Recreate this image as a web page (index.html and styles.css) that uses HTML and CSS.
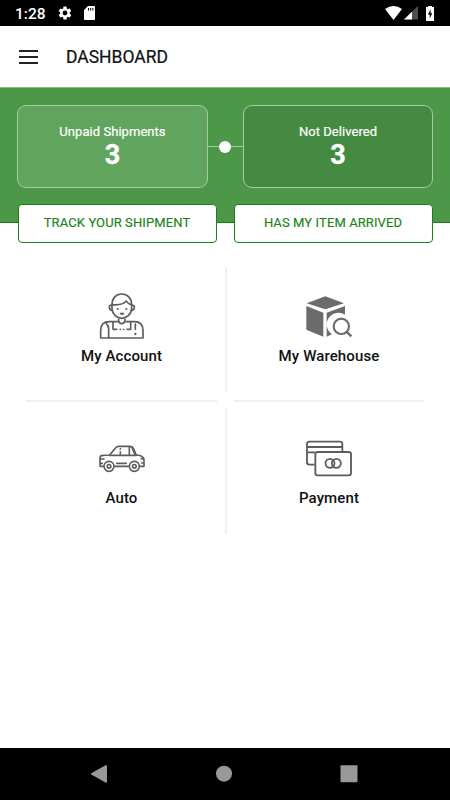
FILE: index.html
```html
<!DOCTYPE html>
<html lang="en">
<head>
  <meta charset="UTF-8">
  <meta name="viewport" content="width=device-width, initial-scale=1">
  <title>Dashboard</title>
  <link rel="stylesheet" href="styles.css">
</head>
<body>
  <!-- Status bar -->
  <div class="status-bar">
    <span class="time">1:28</span>
    <svg class="gear" width="16" height="16" viewBox="0 0 24 24"><path fill="#fff" d="M19.14 12.94c.04-.3.06-.61.06-.94s-.02-.64-.07-.94l2.03-1.58a.49.49 0 0 0 .12-.61l-1.92-3.32a.49.49 0 0 0-.59-.22l-2.39.96c-.5-.38-1.03-.7-1.62-.94l-.36-2.54a.48.48 0 0 0-.48-.41h-3.84a.47.47 0 0 0-.47.41l-.36 2.54c-.59.24-1.13.57-1.62.94l-2.39-.96a.48.48 0 0 0-.59.22L2.74 8.87a.47.47 0 0 0 .12.61l2.03 1.58c-.05.3-.09.63-.09.94s.02.64.07.94l-2.03 1.58a.49.49 0 0 0-.12.61l1.92 3.32c.12.22.37.29.59.22l2.39-.96c.5.38 1.03.7 1.62.94l.36 2.54c.05.24.24.41.48.41h3.84c.24 0 .44-.17.47-.41l.36-2.54c.59-.24 1.13-.56 1.62-.94l2.39.96c.22.08.47 0 .59-.22l1.92-3.32a.47.47 0 0 0-.12-.61l-2.01-1.58zM12 15.6a3.6 3.6 0 1 1 0-7.2 3.6 3.6 0 0 1 0 7.2z"/></svg>
    <svg width="11" height="14" viewBox="0 0 11 14"><path fill="#fff" d="M4 0h6q1 0 1 1v12q0 1-1 1H1q-1 0-1-1V4z"/><path stroke="#000" stroke-width="1" d="M4.500 2v2.500M6.700 2v2.500M8.900 2v2.500"/></svg>
    <div class="status-right">
      <svg width="17" height="14" viewBox="0 0 17 14"><path fill="#fff" d="M0 3Q8.500-3 17 3L8.500 14z"/></svg>
      <svg width="14" height="14" viewBox="0 0 14 14"><path fill="#505050" d="M14 0v13.500H0z"/><path fill="#fff" d="M8 5.800v7.700H0z"/></svg>
      <svg class="battery" width="8" height="15" viewBox="0 0 8 15"><path fill="#fff" d="M2 1V0h4v1h2v14H0V1z"/><path fill="#000" d="M4.700 3.500L1.800 8.500h1.900v4L6.300 7.300H4.600z"/></svg>
    </div>
  </div>

  <!-- App bar -->
  <header class="app-bar">
    <div class="menu"><span></span><span></span><span></span></div>
    <h1>DASHBOARD</h1>
  </header>

  <!-- Shipment summary -->
  <section class="summary">
    <div class="card card-light">
      <p>Unpaid Shipments</p>
      <strong>3</strong>
    </div>
    <div class="connector"><span class="dot"></span></div>
    <div class="card card-dark">
      <p>Not Delivered</p>
      <strong>3</strong>
    </div>
  </section>

  <div class="actions">
    <button type="button">TRACK YOUR SHIPMENT</button>
    <button type="button">HAS MY ITEM ARRIVED</button>
  </div>

  <!-- Tiles -->
  <main class="tiles">
    <a class="tile">
      <svg width="46" height="47" viewBox="86 36 138 141">
        <g fill="none" stroke="#5c5c5c" stroke-width="5" stroke-linecap="round" stroke-linejoin="round">
          <path d="M125 74C125 54 137 42 154 42S184 54 184 74V86C183 103 168 115 154 115S126 103 125 86z"/>
          <path d="M126 74C145 76 160 72 168 63Q172 71 182 74"/>
          <path d="M125 75Q116 75 117 83T126 91M184 75Q193 75 192 83T183 91"/>
          <path d="M145 117V123Q147 131 154 131T164 123V117"/>
          <path d="M142 125H117Q91 125 91 151V174H218V151Q218 125 192 125H167"/>
          <path d="M108 131Q115 137 115 147V173M128 126V148H139M181 126V148H170M195 132V148"/>
        </g>
        <g fill="#5c5c5c"><circle cx="142" cy="87" r="3.300"/><circle cx="168" cy="87" r="3.300"/><path d="M148 98h14q-1 7-7 7t-7-7z"/><circle cx="150" cy="148" r="2.700"/><circle cx="160" cy="148" r="2.700"/><circle cx="195" cy="162" r="3.500"/></g>
      </svg>
      <span>My Account</span>
    </a>
    <i class="line-v"></i>
    <a class="tile">
      <svg width="46" height="47" viewBox="109 36 138 141">
        <path fill="#6b6b6b" d="M111 70L167 49L223 70L167 88zM110 78L161 98V170L110 149zM171 98L226 78V104A35 35 0 0 0 187 163L171 170z"/>
        <circle cx="215" cy="139" r="23" fill="none" stroke="#6b6b6b" stroke-width="6.500"/>
        <path d="M230 155L245 169" stroke="#6b6b6b" stroke-width="7"/>
      </svg>
      <span>My Warehouse</span>
    </a>
    <i class="line-h"></i>
    <i class="line-h"></i>
    <a class="tile">
      <svg width="46" height="47" viewBox="86 27 138 141">
        <g fill="none" stroke="#5c5c5c" stroke-width="4.800" stroke-linejoin="round" stroke-linecap="round">
          <path d="M99 124H89V99Q89 91 98 91L118 90L136 68Q139 64 145 64H178Q186 64 189 70L198 90Q221 91 221 106V124H208M133 124H174"/>
          <path d="M118 91H198M177 65V90M185 67L193 87M139 115H168M90 102H101M90 115H96M213 101H220M214 114H219"/>
          <circle cx="116" cy="124" r="15"/><circle cx="192" cy="124" r="15"/>
          <circle cx="116" cy="124" r="5.500"/><circle cx="192" cy="124" r="5.500"/>
        </g>
        <path stroke="#5c5c5c" stroke-width="4.500" d="M150 69v5M150 79v10"/>
      </svg>
      <span>Auto</span>
    </a>
    <i class="line-v"></i>
    <a class="tile">
      <svg width="46" height="47" viewBox="109 27 138 141">
        <g fill="none" stroke="#5c5c5c" stroke-width="5.500">
          <path d="M135 119H119Q112 119 112 112V57Q112 50 119 50H211Q218 50 218 57V80"/>
          <path d="M112 66H219M112 82H136"/>
          <rect x="137" y="81" width="107" height="70" rx="7"/>
          <circle cx="181" cy="115" r="13.500"/><circle cx="200" cy="115" r="13.500"/>
        </g>
      </svg>
      <span>Payment</span>
    </a>
  </main>

  <!-- System navigation -->
  <nav class="nav-bar">
    <svg width="18" height="18" viewBox="0 0 18 18"><path fill="#999" d="M1.300 8.200L15.500.300Q17 0 17 1V17Q17 18 15.500 17.600L1.300 9.500Q.500 8.900 1.300 8.200z"/></svg>
    <svg width="18" height="18" viewBox="0 0 18 18"><circle cx="9" cy="8.700" r="8" fill="#999"/></svg>
    <svg width="18" height="18" viewBox="0 0 18 18"><rect x=".500" y=".300" width="17" height="17" rx="1" fill="#999"/></svg>
  </nav>
</body>
</html>
```
FILE: styles.css
```css
* { box-sizing: border-box; }

body {
  font-family: Roboto, "Liberation Sans", sans-serif;
  margin: 0;
  height: 800px;
  display: flex;
  flex-direction: column;
  background: #fff;
  color: #111;
}

svg { display: block; flex: none; }

.status-bar {
  height: 26px;
  background: #000;
  color: #fff;
  display: flex;
  align-items: center;
  padding: 0 16px 0 15px;
}

.time {
  width: 42px;
  font-size: 15.5px;
  font-weight: 500;
  line-height: 26px;
  padding-top: 1px;
}

.gear { margin-right: 11px; }

.status-right {
  margin-left: auto;
  display: flex;
  align-items: center;
  gap: 2px;
}

.battery { margin-left: 6px; }

.app-bar {
  height: 61px;
  display: flex;
  align-items: center;
  padding-left: 19px;
}

.menu {
  width: 19px;
  display: grid;
  gap: 4px;
  margin-right: 28px;
}

.menu span {
  height: 2px;
  background: #222;
}

h1 {
  margin: 1px 0 0;
  font-size: 17.5px;
  font-weight: 400;
  line-height: 24px;
  -webkit-text-stroke: 0.2px #111;
}

.summary {
  height: 136px;
  background: #4c9848;
  border-top: 1px solid #86b984;
  border-bottom: 1px solid #188418;
  display: flex;
  padding: 17px 17px 0;
}

.card {
  width: 191px;
  height: 83px;
  border: 1px solid #a5cca3;
  border-radius: 9px;
  color: #fff;
  text-align: center;
  padding-top: 17px;
}

.card-light { background: #60a45d; }

.card-dark {
  width: 190px;
  background: #458a42;
}

.card p {
  margin: 0;
  font-size: 13px;
  line-height: 17px;
  letter-spacing: 0.05px;
  -webkit-text-stroke: 0.2px #fff;
}

.card strong {
  display: block;
  font-size: 27px;
  line-height: 28px;
  padding-top: 1px;
  -webkit-text-stroke: 0.3px #fff;
}

.connector {
  flex: 1;
  height: 83px;
  display: flex;
  align-items: center;
  justify-content: center;
  background: linear-gradient(#a5cca3, #a5cca3) center / 100% 1px no-repeat;
}

.dot {
  width: 12px;
  height: 12px;
  margin-right: 1px;
  border-radius: 50%;
  background: #fff;
}

.actions {
  display: grid;
  grid-template-columns: 199px 199px;
  justify-content: space-between;
  padding: 0 17px 0 18px;
  margin-top: -19px;
}

button {
  height: 39px;
  border: 1px solid #188418;
  border-radius: 4px;
  background: #fff;
  color: #188418;
  font-family: inherit;
  font-size: 13px;
  letter-spacing: 0.1px;
  padding: 0 1px 2px 0;
  -webkit-text-stroke: 0.15px #188418;
}

.tiles {
  display: grid;
  grid-template-columns: 191px 2px 190px;
  grid-template-rows: 125px 2px 125px;
  gap: 7.5px;
  padding: 24px 26px 0;
}

.tile {
  display: flex;
  flex-direction: column;
  align-items: center;
  padding-top: 25px;
}

.tile span {
  margin-top: 7px;
  font-size: 15px;
  font-weight: 500;
  line-height: 20px;
  letter-spacing: 0.12px;
}

.line-v, .line-h { background: #f0f0f0; }
.line-h:nth-of-type(3) { grid-column: 3; }

.nav-bar {
  height: 52px;
  margin-top: auto;
  background: #000;
  display: flex;
  justify-content: space-between;
  padding: 17px 92px 0 90px;
}
```
